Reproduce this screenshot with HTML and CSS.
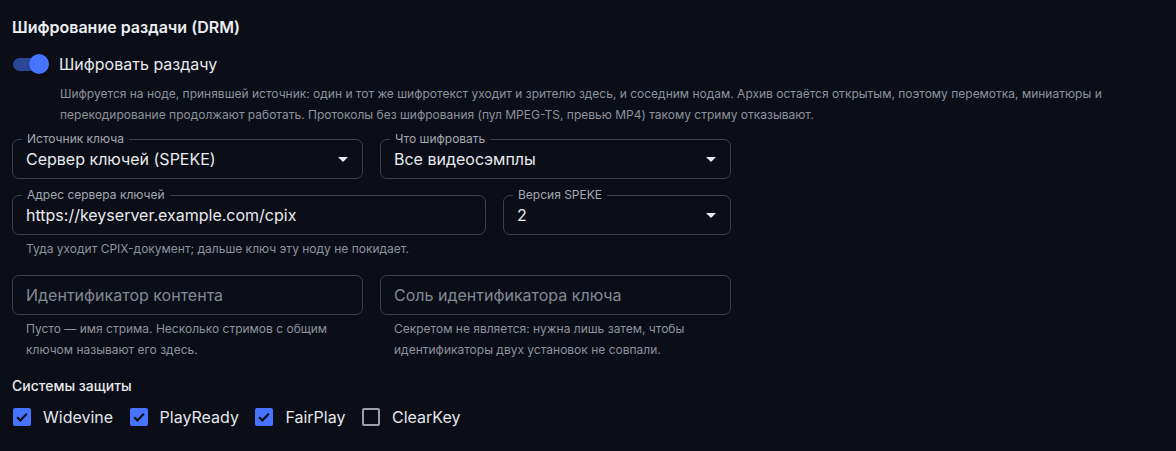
FILE: index.html
```html
<!DOCTYPE html>
<html lang="ru">
<head>
<meta charset="utf-8">
<title>DRM</title>
<link rel="stylesheet" href="styles.css">
</head>
<body>
<main class="panel">
  <h2 class="title">Шифрование раздачи (DRM)</h2>

  <div class="switch-row">
    <span class="switch"><span class="track"></span><span class="thumb"></span></span>
    <span class="switch-label">Шифровать раздачу</span>
  </div>
  <p class="desc">Шифруется на ноде, принявшей источник: один и тот же шифротекст уходит и зрителю здесь, и соседним нодам. Архив остаётся открытым, поэтому перемотка, миниатюры и перекодирование продолжают работать. Протоколы без шифрования (пул MPEG-TS, превью MP4) такому стриму отказывают.</p>

  <div class="row two first">
    <div class="cell">
      <div class="field select">
        <span class="flabel">Источник ключа</span>
        <span class="value">Сервер ключей (SPEKE)</span>
        <svg class="arrow" viewBox="0 0 10 5"><path d="M0 0h10L5 5z"/></svg>
      </div>
    </div>
    <div class="cell">
      <div class="field select">
        <span class="flabel">Что шифровать</span>
        <span class="value">Все видеосэмплы</span>
        <svg class="arrow" viewBox="0 0 10 5"><path d="M0 0h10L5 5z"/></svg>
      </div>
    </div>
  </div>

  <div class="row wide">
    <div class="cell">
      <div class="field">
        <span class="flabel">Адрес сервера ключей</span>
        <span class="value">https://keyserver.example.com/cpix</span>
      </div>
      <p class="helper">Туда уходит CPIX-документ; дальше ключ эту ноду не покидает.</p>
    </div>
    <div class="cell">
      <div class="field select">
        <span class="flabel">Версия SPEKE</span>
        <span class="value">2</span>
        <svg class="arrow" viewBox="0 0 10 5"><path d="M0 0h10L5 5z"/></svg>
      </div>
    </div>
  </div>

  <div class="row two">
    <div class="cell">
      <div class="field">
        <span class="value placeholder">Идентификатор контента</span>
      </div>
      <p class="helper">Пусто — имя стрима. Несколько стримов с общим ключом называют его здесь.</p>
    </div>
    <div class="cell">
      <div class="field">
        <span class="value placeholder">Соль идентификатора ключа</span>
      </div>
      <p class="helper">Секретом не является: нужна лишь затем, чтобы идентификаторы двух установок не совпали.</p>
    </div>
  </div>

  <h3 class="subtitle">Системы защиты</h3>
  <div class="checks">
    <label class="check"><span class="box on"><svg viewBox="0 0 18 18"><path d="M4.2 9.2l3.2 3.2 6.4-6.6" /></svg></span><span>Widevine</span></label>
    <label class="check"><span class="box on"><svg viewBox="0 0 18 18"><path d="M4.2 9.2l3.2 3.2 6.4-6.6" /></svg></span><span>PlayReady</span></label>
    <label class="check"><span class="box on"><svg viewBox="0 0 18 18"><path d="M4.2 9.2l3.2 3.2 6.4-6.6" /></svg></span><span>FairPlay</span></label>
    <label class="check"><span class="box"></span><span>ClearKey</span></label>
  </div>
</main>
</body>
</html>
```

FILE: styles.css
```css
* { box-sizing: border-box; }
html, body { margin: 0; padding: 0; }
body {
  background: #0b0e17;
  color: #e4e6eb;
  font-family: Inter, "Noto Sans", sans-serif;
  width: 1176px;
  height: 451px;
  overflow: hidden;
}
.panel {
  padding: 15px 12px 0 12px;
}
.title {
  margin: 0;
  font-size: 16px;
  line-height: 24px;
  font-weight: 600;
  color: #eceef2;
}
.switch-row {
  display: flex;
  align-items: center;
  height: 38px;
  margin-top: 6px;
}
.switch {
  position: relative;
  width: 47px;
  height: 38px;
  flex: none;
  display: flex;
  align-items: center;
}
.track {
  display: block;
  margin-left: 1px;
  width: 35px;
  height: 13px;
  border-radius: 7px;
  background: #2c4796;
}
.thumb {
  position: absolute;
  left: 17px;
  top: 9px;
  width: 20px;
  height: 20px;
  border-radius: 50%;
  background: #4673ff;
  box-shadow: 0 1px 3px rgba(0,0,0,0.4);
}
.switch-label {
  font-size: 16px;
  color: #e8eaee;
}
.desc {
  margin: 0 0 0 48px;
  max-width: 1060px;
  font-size: 12px;
  line-height: 21px;
  color: #8d929d;
}
.row {
  display: grid;
  column-gap: 17px;
  width: 719px;
  margin-top: 16px;
}
.row.first { margin-top: 14px; }
.row.two { grid-template-columns: 1fr 1fr; }
.row.wide { grid-template-columns: 474px 228px; }
.field {
  position: relative;
  height: 40px;
  border: 1px solid #3b404b;
  border-radius: 7px;
  display: flex;
  align-items: center;
  padding: 0 14px 0 13px;
}
.flabel {
  position: absolute;
  left: 9px;
  top: -9px;
  padding: 0 5px;
  background: #0b0e17;
  font-size: 12px;
  line-height: 16px;
  color: #a3a8b2;
}
.value {
  font-size: 16px;
  color: #e8eaee;
  flex: 1;
  white-space: nowrap;
}
.value.placeholder { color: #838995; }
.arrow {
  width: 10px;
  height: 5px;
  fill: #e6e8ec;
  flex: none;
}
.helper {
  margin: 3px 14px 0 14px;
  font-size: 12px;
  line-height: 21px;
  color: #8d929d;
}
.subtitle {
  margin: 16px 0 0 0;
  font-size: 14px;
  line-height: 20px;
  font-weight: 500;
  color: #e8eaee;
}
.checks {
  display: flex;
  align-items: center;
  height: 42px;
  gap: 16.5px;
  padding-left: 1px;
}
.check {
  display: flex;
  align-items: center;
  gap: 12px;
  font-size: 16px;
  color: #e4e6eb;
}
.box {
  width: 18px;
  height: 18px;
  border-radius: 2px;
  border: 2px solid #9ba0aa;
  display: block;
}
.box.on {
  border: none;
  background: #4673ff;
}
.box svg {
  display: block;
  width: 18px;
  height: 18px;
  fill: none;
  stroke: #0b0e17;
  stroke-width: 2.2;
}
```
